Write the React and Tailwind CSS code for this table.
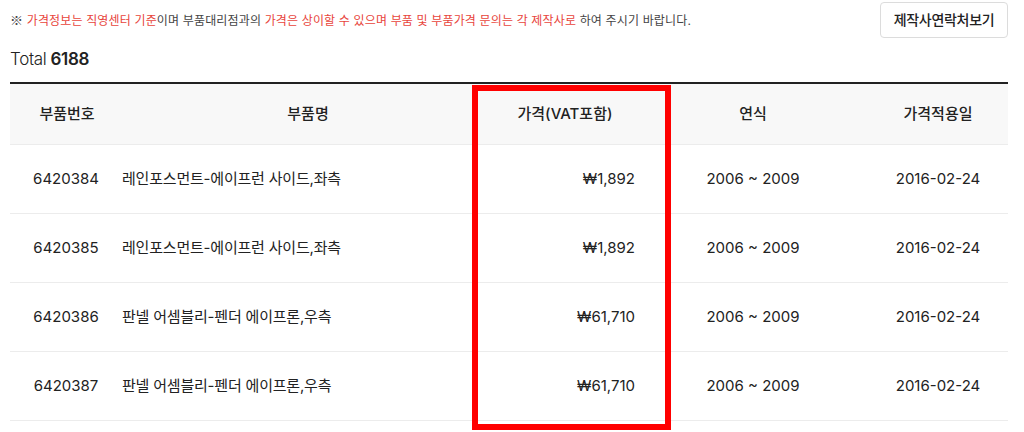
import React from "react";

const rows = [
  ["6420384", "레인포스먼트-에이프런 사이드,좌측", "₩1,892", "2006 ~ 2009", "2016-02-24"],
  ["6420385", "레인포스먼트-에이프런 사이드,좌측", "₩1,892", "2006 ~ 2009", "2016-02-24"],
  ["6420386", "판넬 어셈블리-펜더 에이프론,우측", "₩61,710", "2006 ~ 2009", "2016-02-24"],
  ["6420387", "판넬 어셈블리-펜더 에이프론,우측", "₩61,710", "2006 ~ 2009", "2016-02-24"],
];

export default function App() {
  return (
    <div
      className="relative w-[1024px] h-[432px] overflow-hidden bg-white text-[#222]"
      style={{ fontFamily: "Inter, 'Noto Sans CJK KR', sans-serif" }}
    >
      <div className="pl-[10px] pr-[16px]">
        <div className="flex items-center justify-between h-[38px] pt-[1px]">
          <p className="text-[12px] tracking-[0.15px] text-[#444]">
            <span className="text-[13px]" style={{ fontFamily: "'Noto Sans CJK KR', sans-serif" }}>※</span>{" "}
            <span className="text-[#e8453c]">가격정보는 직영센터 기준</span>이며 부품대리점과의{" "}
            <span className="text-[#e8453c]">가격은 상이할 수 있으며 부품 및 부품가격 문의는 각 제작사로</span>{" "}
            하여 주시기 바랍니다.
          </p>
          <button className="w-[128px] h-[36px] rounded-[4px] border border-[#dcdcdc] bg-white text-[14px] font-medium text-[#222] tracking-[-0.3px]">
            제작사연락처보기
          </button>
        </div>
        <div className="h-[44px] flex items-center text-[17px] tracking-[-0.3px]">
          <span className="font-light">Total</span>
          <span className="ml-[4px] font-semibold">6188</span>
        </div>
        <div className="border-t-2 border-[#222]">
          <div className="flex h-[61px] items-center bg-[#f8f8f8] border-b border-[#ececec] text-[15px] font-medium">
            <div className="w-[114px] text-center">부품번호</div>
            <div className="w-[368px] text-center">부품명</div>
            <div className="w-[146px] text-center">가격(VAT포함)</div>
            <div className="w-[230px] text-center">연식</div>
            <div className="w-[140px] text-center">가격적용일</div>
          </div>
          {rows.map((r, i) => (
            <div key={i} className="flex h-[69px] items-center border-b border-[#ececec] text-[15px]">
              <div className="w-[112px] text-center">{r[0]}</div>
              <div className="w-[370px] text-left text-[15px] tracking-[-0.2px]">{r[1]}</div>
              <div className="w-[146px] text-right pr-[3px]">{r[2]}</div>
              <div className="w-[230px] text-center">{r[3]}</div>
              <div className="w-[140px] text-center">{r[4]}</div>
            </div>
          ))}
        </div>
      </div>
      <div className="absolute left-[472px] top-[85px] w-[199px] h-[345px] border-[6px] border-[#ff0000]" />
    </div>
  );
}
